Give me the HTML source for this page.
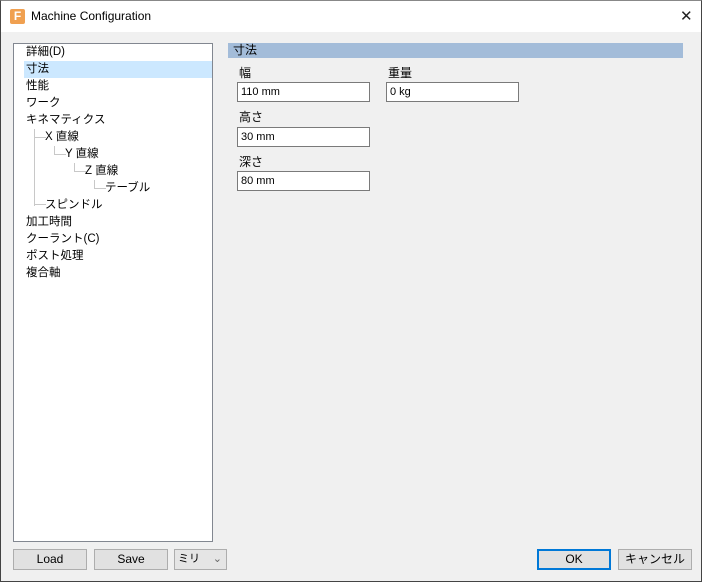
<!DOCTYPE html>
<html><head><meta charset="utf-8"><style>
*{margin:0;padding:0;box-sizing:border-box}
body{width:702px;height:582px;background:#f0f0f0;font-family:"Liberation Sans","Noto Sans CJK JP",sans-serif;font-size:12px;color:#000;position:relative;overflow:hidden;border:1px solid #444;border-top:1px solid #888}
.a{position:absolute}
.title{left:0;top:0;width:700px;height:31px;background:#fff}
.tree{left:12px;top:42px;width:200px;height:499px;background:#fff;border:1px solid #828790}
.it{position:absolute;left:12px;height:17px;line-height:17px;white-space:nowrap;font-size:11.5px}
.ln{position:absolute;border-left:1px solid #c8c8c8;border-bottom:1px solid #c8c8c8}
.inp{position:absolute;background:#fff;border:1px solid #7a7a7a;height:20px;width:133px;line-height:18px;padding-left:3px;font-size:11px}
.btn{position:absolute;background:#e1e1e1;border:1px solid #adadad;height:21px;text-align:center;line-height:19px;font-size:12px}
</style></head><body>
<div class="a title">
 <div class="a" style="left:9px;top:8px;width:15px;height:15px;background:#f0a050;border-radius:2px;color:#fff;font-weight:bold;font-size:12px;line-height:15px;text-align:center;">F</div>
 <div class="a" style="left:30px;top:8px;font-size:12px;">Machine Configuration</div>
 <div class="a" style="left:679px;top:6px;font-size:15px;font-weight:300;color:#222">✕</div>
</div>
<div class="a tree">
 <div class="a" style="left:10px;top:17px;width:188px;height:17px;background:#cce8ff"></div>
 <div class="it" style="top:0px">詳細(D)</div>
 <div class="it" style="top:17px">寸法</div>
 <div class="it" style="top:34px">性能</div>
 <div class="it" style="top:51px">ワーク</div>
 <div class="it" style="top:68px">キネマティクス</div>
 <div class="ln" style="left:20px;top:85px;width:12px;height:9px"></div>
 <div class="ln" style="left:20px;top:94px;width:12px;height:68px;border-bottom:none"></div>
 <div class="ln" style="left:20px;top:152px;width:12px;height:9px;border-left:none"></div>
 <div class="it" style="left:31px;top:85px">X 直線</div>
 <div class="ln" style="left:40px;top:102px;width:12px;height:9px"></div>
 <div class="it" style="left:51px;top:102px">Y 直線</div>
 <div class="ln" style="left:60px;top:119px;width:12px;height:9px"></div>
 <div class="it" style="left:71px;top:119px">Z 直線</div>
 <div class="ln" style="left:80px;top:136px;width:12px;height:9px"></div>
 <div class="it" style="left:91px;top:136px">テーブル</div>
 <div class="it" style="left:31px;top:153px">スピンドル</div>
 <div class="it" style="top:170px">加工時間</div>
 <div class="it" style="top:187px">クーラント(C)</div>
 <div class="it" style="top:204px">ポスト処理</div>
 <div class="it" style="top:221px">複合軸</div>
</div>
<div class="a" style="left:227px;top:42px;width:455px;height:15px;background:#a3bcd9;line-height:15px;padding-left:5px">寸法</div>
<div class="a" style="left:238px;top:63px">幅</div>
<div class="a" style="left:387px;top:63px">重量</div>
<div class="inp" style="left:236px;top:81px">110 mm</div>
<div class="inp" style="left:385px;top:81px">0 kg</div>
<div class="a" style="left:238px;top:107px">高さ</div>
<div class="inp" style="left:236px;top:126px">30 mm</div>
<div class="a" style="left:238px;top:152px">深さ</div>
<div class="inp" style="left:236px;top:170px">80 mm</div>
<div class="btn" style="left:12px;top:548px;width:74px">Load</div>
<div class="btn" style="left:93px;top:548px;width:74px">Save</div>
<div class="a" style="left:173px;top:548px;width:53px;height:21px;background:#e5e5e5;border:1px solid #adadad;line-height:19px;padding-left:3px;font-size:11px">ミリ<span style="position:absolute;right:4px;color:#666">⌄</span></div>
<div class="btn" style="left:536px;top:548px;width:74px;border:2px solid #0078d7;line-height:17px">OK</div>
<div class="btn" style="left:617px;top:548px;width:74px">キャンセル</div>
</body></html>
